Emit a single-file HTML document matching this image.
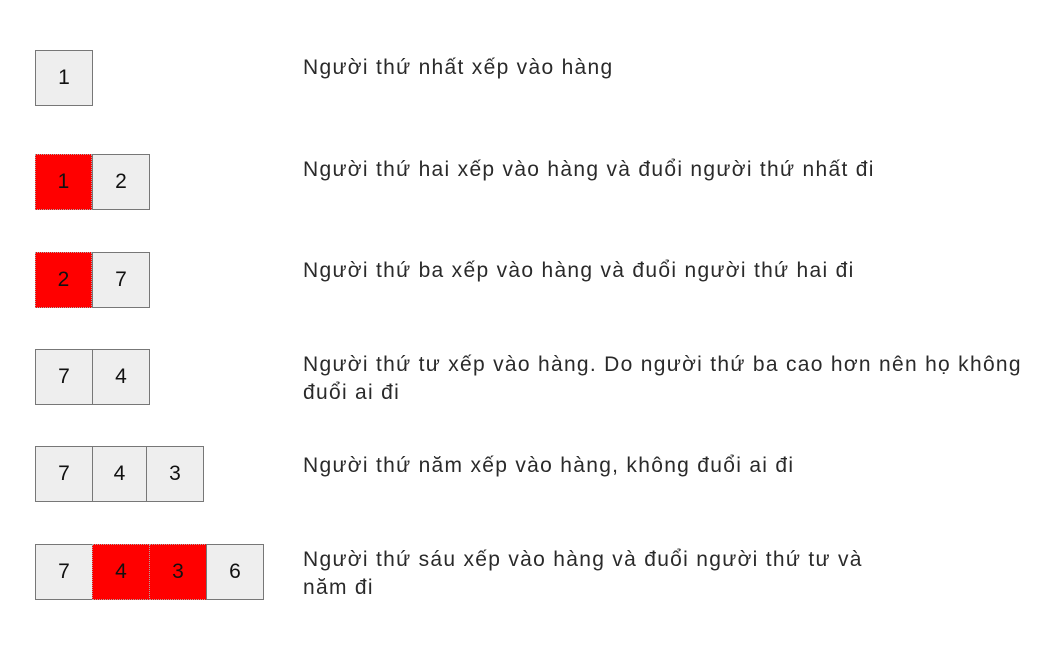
<!DOCTYPE html>
<html><head><meta charset="utf-8"><style>
body{margin:0;width:1050px;height:648px;background:#fff;position:relative;font-family:"Liberation Sans",sans-serif;overflow:hidden}
.b{position:absolute;height:56px;box-sizing:border-box;border:1px solid #777;background:#eee;font-size:21px;color:#111;display:flex;align-items:center;justify-content:center}
.r{background:#f00;border:1px dotted #aaa}
.t{position:absolute;left:303px;font-size:21px;letter-spacing:1.3px;color:#2a2a2a;line-height:28px;width:745px;white-space:nowrap}
</style></head><body>
<div class="b" style="left:35px;top:50px;width:58px">1</div>
<div class="t" style="top:54px">Người thứ nhất xếp vào hàng</div>

<div class="b r" style="left:35px;top:154px;width:57px">1</div>
<div class="b" style="left:92px;top:154px;width:58px">2</div>
<div class="t" style="top:156px">Người thứ hai xếp vào hàng và đuổi người thứ nhất đi</div>

<div class="b r" style="left:35px;top:252px;width:57px">2</div>
<div class="b" style="left:92px;top:252px;width:58px">7</div>
<div class="t" style="top:257px">Người thứ ba xếp vào hàng và đuổi người thứ hai đi</div>

<div class="b" style="left:35px;top:349px;width:58px">7</div>
<div class="b" style="left:92px;top:349px;width:58px">4</div>
<div class="t" style="top:351px">Người thứ tư xếp vào hàng. Do người thứ ba cao hơn nên họ không<br>đuổi ai đi</div>

<div class="b" style="left:35px;top:446px;width:58px">7</div>
<div class="b" style="left:92px;top:446px;width:55px">4</div>
<div class="b" style="left:146px;top:446px;width:58px">3</div>
<div class="t" style="top:452px">Người thứ năm xếp vào hàng, không đuổi ai đi</div>

<div class="b" style="left:35px;top:544px;width:58px">7</div>
<div class="b r" style="left:92px;top:544px;width:58px">4</div>
<div class="b r" style="left:149px;top:544px;width:58px">3</div>
<div class="b" style="left:206px;top:544px;width:58px">6</div>
<div class="t" style="top:546px">Người thứ sáu xếp vào hàng và đuổi người thứ tư và<br>năm đi</div>
</body></html>
